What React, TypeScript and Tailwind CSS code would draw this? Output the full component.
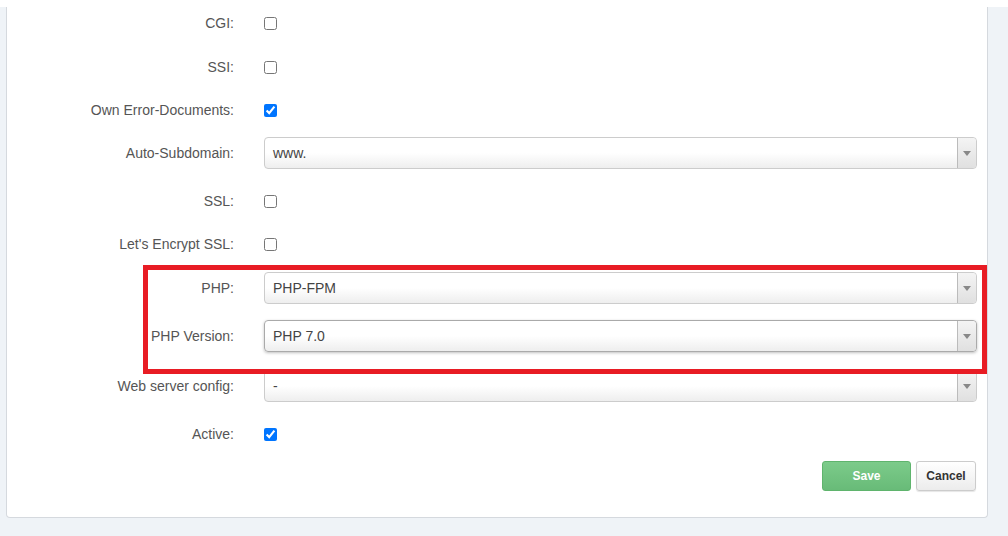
import React from 'react';

type Row =
  | { label: string; kind: 'check'; checked?: boolean; mt: string }
  | { label: string; kind: 'select'; value: string; mt: string; focus?: boolean };

const rows: Row[] = [
  { label: 'CGI:', kind: 'check', mt: 'mt-[7px]' },
  { label: 'SSI:', kind: 'check', mt: 'mt-[12px]' },
  { label: 'Own Error-Documents:', kind: 'check', checked: true, mt: 'mt-[11px]' },
  { label: 'Auto-Subdomain:', kind: 'select', value: 'www.', mt: 'mt-[11px]' },
  { label: 'SSL:', kind: 'check', mt: 'mt-[16px]' },
  { label: "Let's Encrypt SSL:", kind: 'check', mt: 'mt-[11px]' },
  { label: 'PHP:', kind: 'select', value: 'PHP-FPM', mt: 'mt-[12px]' },
  { label: 'PHP Version:', kind: 'select', value: 'PHP 7.0', mt: 'mt-[16px]', focus: true },
  { label: 'Web server config:', kind: 'select', value: '-', mt: 'mt-[18px]' },
  { label: 'Active:', kind: 'check', checked: true, mt: 'mt-[16px]' },
];

function Select({ value, focus }: { value: string; focus?: boolean }) {
  return (
    <div
      className={
        'flex h-[32px] flex-1 items-stretch rounded-[4px] border bg-gradient-to-b from-white from-50% to-[#eeeeee] ' +
        (focus ? 'border-[#aaaaaa] shadow-[0_1px_3px_rgba(0,0,0,0.25)]' : 'border-[#cccccc]')
      }
    >
      <div className="flex flex-1 items-center pl-[8px] text-[14px] text-[#444444]">{value}</div>
      <div className="flex w-[19px] items-center justify-center rounded-r-[4px] border-l border-[#bbbbbb] bg-gradient-to-b from-[#f4f4f4] to-[#e0e0e0]">
        <svg width="8" height="5" viewBox="0 0 8 5">
          <path d="M0 0 L8 0 L4 5 Z" fill="#888888" />
        </svg>
      </div>
    </div>
  );
}

export default function App() {
  return (
    <div className="relative min-h-[536px] bg-[#eff3f7] font-['Liberation_Sans',Arial,sans-serif]">
      <div className="ml-[6px] mr-[20px] rounded-b-[4px] border border-t-0 border-[#d5d9de] bg-white pb-[26px] pr-[10px]">
        {rows.map((row) => (
          <div key={row.label} className={'flex h-[32px] items-center ' + row.mt}>
            <div className="w-[227px] text-right text-[14px] text-[#555555]">{row.label}</div>
            <div className="ml-[30px] flex flex-1 items-center">
              {row.kind === 'check' ? (
                <input type="checkbox" defaultChecked={row.checked} className="m-0 h-[13px] w-[13px]" />
              ) : (
                <Select value={row.value} focus={row.focus} />
              )}
            </div>
          </div>
        ))}
        <div className="mt-[11px] flex justify-end gap-[5px] pr-[1px]">
          <button className="h-[30px] w-[89px] rounded-[3px] border border-[#5fb46d] bg-gradient-to-b from-[#7ccb8a] to-[#68bb78] text-[12px] font-bold text-white">
            Save
          </button>
          <button className="h-[30px] w-[60px] rounded-[3px] border border-[#cccccc] bg-gradient-to-b from-white to-[#ececec] text-[12px] font-bold text-[#333333] shadow-[0_1px_1px_rgba(0,0,0,0.1)]">
            Cancel
          </button>
        </div>
      </div>
      <div className="pointer-events-none absolute left-[143px] top-[258px] h-[109px] w-[844px] border-[5px] border-[#e81c24]" />
    </div>
  );
}
